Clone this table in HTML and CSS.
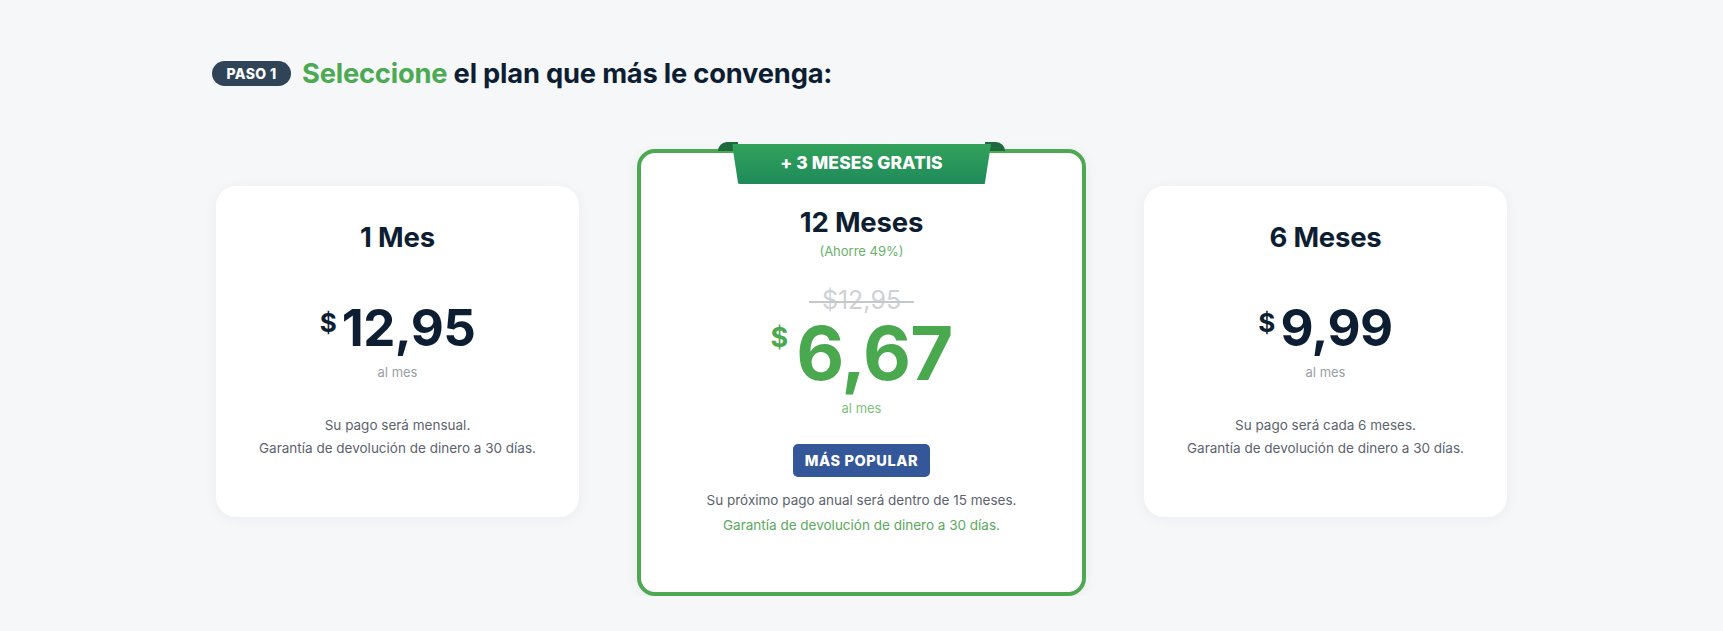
FILE: index.html
```html
<!DOCTYPE html>
<html lang="es">
<head>
<meta charset="utf-8">
<title>Seleccione el plan</title>
<link rel="stylesheet" href="styles.css">
</head>
<body>
<main class="wrap">
  <h2 class="step-title">
    <span class="step-badge">PASO 1</span>
    <span class="step-text"><span class="hl">Seleccione</span> el plan que más le convenga:</span>
  </h2>

  <div class="plans">
    <section class="plan">
      <h3 class="plan-name">1 Mes</h3>
      <div class="price"><span class="cur">$</span><span class="amt">12,95</span></div>
      <div class="per">al mes</div>
      <p class="desc">Su pago será mensual.<br>Garantía de devolución de dinero a 30 días.</p>
    </section>

    <section class="plan plan-featured">
      <div class="ribbon">+ 3 MESES GRATIS</div>
      <h3 class="plan-name">12 Meses</h3>
      <div class="save">(Ahorre 49%)</div>
      <div class="old-price"><span class="old-text">$12,95</span></div>
      <div class="price price-big"><span class="cur">$</span><span class="amt">6,67</span></div>
      <div class="per per-green">al mes</div>
      <div class="popular">MÁS POPULAR</div>
      <p class="desc desc-featured">Su próximo pago anual será dentro de 15 meses.<br><span class="green">Garantía de devolución de dinero a 30 días.</span></p>
    </section>

    <section class="plan">
      <h3 class="plan-name">6 Meses</h3>
      <div class="price"><span class="cur">$</span><span class="amt">9,99</span></div>
      <div class="per">al mes</div>
      <p class="desc">Su pago será cada 6 meses.<br>Garantía de devolución de dinero a 30 días.</p>
    </section>
  </div>
</main>
</body>
</html>
```

FILE: styles.css
```css
* { box-sizing: border-box; }

html, body {
  margin: 0;
  padding: 0;
}

body {
  background: #f5f7f9;
  font-family: Inter, "Noto Sans", "Liberation Sans", sans-serif;
  color: #0e1e32;
}

.wrap {
  width: 1291px;
  margin: 0 auto;
  padding-top: 60px;
}

.step-title {
  display: flex;
  align-items: center;
  gap: 11px;
  margin: 0 0 0 -4px;
  height: 26px;
  font-size: 27.3px;
  font-weight: 700;
  letter-spacing: -0.2px;
}

.step-badge {
  display: inline-flex;
  align-items: center;
  justify-content: center;
  width: 79px;
  height: 25px;
  border-radius: 13px;
  background: #2f4457;
  color: #fff;
  font-size: 14px;
  font-weight: 800;
  letter-spacing: 0.4px;
}

.step-text { color: #0e1e32; }
.hl { color: #4caa52; }

.plans {
  display: flex;
  justify-content: space-between;
  align-items: flex-start;
  margin-top: 63px;
}

.plan {
  position: relative;
  width: 363px;
  margin-top: 37px;
  background: #fff;
  border-radius: 20px;
  box-shadow: 0 2px 14px rgba(20, 30, 50, 0.05);
  text-align: center;
  padding: 35px 20px 57px;
}

.plan-name {
  margin: 0;
  font-size: 27.5px;
  line-height: 32px;
  font-weight: 700;
  letter-spacing: -0.2px;
  color: #0e1e32;
}

.price {
  display: flex;
  justify-content: center;
  align-items: flex-start;
  margin-top: 50px;
  color: #0e1e32;
}

.price .cur {
  font-size: 26px;
  line-height: 26px;
  font-weight: 700;
  margin-top: 7px;
  margin-right: 5px;
}

.price .amt {
  font-size: 51px;
  line-height: 50px;
  font-weight: 700;
  letter-spacing: -0.5px;
}

.per {
  margin-top: 10px;
  font-size: 13px;
  line-height: 18px;
  color: #9a9fa6;
}

.desc {
  margin: 33px 0 0;
  font-size: 13.5px;
  line-height: 23px;
  color: #5b636d;
}

/* featured */
.plan-featured {
  width: 449px;
  margin-top: 0;
  border: 4px solid #4ea852;
  border-radius: 18px;
  padding: 53px 20px 54px;
  box-shadow: 0 2px 14px rgba(20, 30, 50, 0.06);
}

.ribbon {
  position: absolute;
  z-index: 1;
  top: -9px;
  left: 50%;
  transform: translateX(-50%);
  width: 259px;
  height: 40px;
  line-height: 38px;
  color: #fff;
  font-size: 17.5px;
  font-weight: 800;
  letter-spacing: 0.1px;
  background: linear-gradient(180deg, #33a25b 0%, #1f8a5a 100%);
  clip-path: polygon(0 0, 100% 0, 97.6% 100%, 2.4% 100%);
  border-radius: 0 0 8px 8px;
}

.plan-featured::before,
.plan-featured::after {
  content: "";
  position: absolute;
  top: -11px;
  width: 20px;
  height: 9px;
  background: #1d6b3d;
  z-index: 0;
}

.plan-featured::before {
  left: 77px;
  border-radius: 10px 0 0 0;
}

.plan-featured::after {
  right: 77px;
  border-radius: 0 10px 0 0;
}

.save {
  margin-top: 4px;
  font-size: 13px;
  line-height: 18px;
  color: #66b26a;
}

.old-price {
  display: inline-block;
  position: relative;
  margin-top: 26px;
  padding: 0 13px;
  font-size: 25px;
  line-height: 28px;
  font-weight: 400;
  color: #cfd2d5;
}

.old-price::after {
  content: "";
  position: absolute;
  left: 0;
  right: 0;
  top: 15px;
  height: 2px;
  background: #c5c8cb;
}

.price-big {
  margin-top: 2px;
  color: #4aa84e;
}

.price-big .cur {
  font-size: 27px;
  line-height: 27px;
  margin-top: 8px;
  margin-right: 8px;
}

.price-big .amt {
  font-size: 74px;
  line-height: 74px;
  letter-spacing: -0.8px;
}

.per-green {
  margin-top: 9px;
  color: #7fbf82;
}

.popular {
  display: inline-block;
  margin-top: 27px;
  height: 33px;
  line-height: 33px;
  width: 137px;
  background: #34579a;
  color: #fff;
  border-radius: 5px;
  font-size: 14.5px;
  font-weight: 800;
  letter-spacing: 0.6px;
}

.desc-featured {
  margin-top: 11px;
  line-height: 25px;
}

.green { color: #5aa95d; }
```
